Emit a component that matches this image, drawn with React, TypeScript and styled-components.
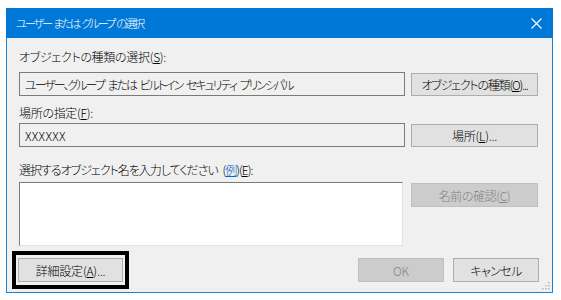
import React from "react";
import styled, { createGlobalStyle } from "styled-components";

const Global = createGlobalStyle`
  html, body { margin: 0; padding: 0; background: #ffffff; }
  body {
    font-family: "Noto Sans CJK JP", "Noto Sans", sans-serif;
    font-size: 12px;
    font-weight: 300;
    color: #000;
  }
`;

const Page = styled.div`
  padding: 8px 0 0 6px;
`;

const Window = styled.div`
  position: relative;
  box-sizing: border-box;
  width: 547px;
  height: 285px;
  border: 1px solid #1883d7;
  border-top: none;
  background: #f0f0f0;
  display: flex;
  flex-direction: column;
`;

const TitleBar = styled.div`
  height: 30px;
  margin: 0 -1px;
  background: #0078d7;
  color: #fff;
  display: flex;
  align-items: center;
  justify-content: space-between;
  padding: 0 11px 0 10px;
`;

const TitleText = styled.span`
  font-size: 11.5px;
  font-feature-settings: "palt";
  letter-spacing: -2.5px;
  word-spacing: 2.5px;
`;

const Body = styled.div`
  flex: 1;
  display: flex;
  flex-direction: column;
  padding: 11px 13px 0 12px;
`;

const Label = styled.div<{ $mt?: number; $mb?: number; $ls?: number }>`
  height: 16px;
  line-height: 16px;
  margin-top: ${(p) => p.$mt ?? 0}px;
  margin-bottom: ${(p) => p.$mb ?? 0}px;
  font-feature-settings: "palt";
  letter-spacing: ${(p) => p.$ls ?? -0.5}px;
  word-spacing: 3px;
`;

const Row = styled.div<{ $align?: string }>`
  display: grid;
  grid-template-columns: 386px 127px;
  column-gap: 6px;
  align-items: ${(p) => p.$align ?? "center"};
`;

const Field = styled.div<{ $ls?: number }>`
  box-sizing: border-box;
  height: 24px;
  border: 1px solid #7a7a7a;
  background: #f0f0f0;
  padding: 0 5px;
  display: flex;
  align-items: center;
  font-feature-settings: "palt";
  letter-spacing: ${(p) => p.$ls ?? 0}px;
  word-spacing: 3px;
  white-space: pre;
  overflow: hidden;
`;

const TextArea = styled.div`
  box-sizing: border-box;
  height: 64px;
  margin-right: 2px;
  background: #fff;
  border: 1px solid;
  border-color: #7a7a7a #e3e3e3 #e3e3e3 #7a7a7a;
`;

const Button = styled.div<{ $disabled?: boolean; $w?: number; $h?: number; $ls?: number }>`
  box-sizing: border-box;
  width: ${(p) => (p.$w ? `${p.$w}px` : "auto")};
  height: ${(p) => p.$h ?? 23}px;
  border: 1px solid ${(p) => (p.$disabled ? "#bfbfbf" : "#adadad")};
  background: ${(p) => (p.$disabled ? "#cccccc" : "#e1e1e1")};
  color: ${(p) => (p.$disabled ? "#838383" : "#000")};
  display: flex;
  align-items: center;
  justify-content: center;
  font-feature-settings: "palt";
  letter-spacing: ${(p) => p.$ls ?? -0.2}px;
  white-space: nowrap;
`;

const Link = styled.span`
  color: #0066cc;
  text-decoration: underline;
`;

const BottomRow = styled.div`
  margin-top: 5px;
  display: flex;
  align-items: center;
`;

const FocusBox = styled.div`
  margin-left: -7px;
  border: 4px solid #000;
  padding: 3px 2px;
  background: #f0f0f0;
`;

const Spacer = styled.div`
  flex: 1;
`;

const ButtonGroup = styled.div`
  display: flex;
  gap: 9px;
`;

const CheckTop = styled.div`
  align-self: start;
  margin-top: 1px;
`;

const Grip = styled.svg`
  position: absolute;
  right: 2px;
  bottom: 2px;
`;

export default function App() {
  return (
    <Page>
      <Global />
      <Window>
        <TitleBar>
          <TitleText>ユーザー または グループ の選択</TitleText>
          <svg width="11" height="11" viewBox="0 0 11 11">
            <path d="M0.5 0.5 L10.5 10.5 M10.5 0.5 L0.5 10.5" stroke="#fff" strokeWidth="1.1" />
          </svg>
        </TitleBar>
        <Body>
          <Label $mb={7} $ls={-0.3}>
            オブジェクトの種類の選択(<u>S</u>):
          </Label>
          <Row>
            <Field $ls={-2}>ユーザー、グループ または ビルトイン セキュリティ プリンシパル</Field>
            <Button $ls={-1.2}>
              オブジェクトの種類(<u>O</u>)...
            </Button>
          </Row>
          <Label $mt={9} $mb={2} $ls={-0.3}>
            場所の指定(<u>F</u>):
          </Label>
          <Row>
            <Field $ls={0.3}>XXXXXX</Field>
            <Button>
              場所(<u>L</u>)...
            </Button>
          </Row>
          <Label $mt={15} $mb={4} $ls={-1}>
            選択するオブジェクト名を入力してください (<Link>例</Link>)(<u>E</u>):
          </Label>
          <Row $align="start">
            <TextArea />
            <CheckTop>
              <Button $disabled $h={24} $ls={-0.4}>
                名前の確認(<u>C</u>)
              </Button>
            </CheckTop>
          </Row>
          <BottomRow>
            <FocusBox>
              <Button $w={105} $h={24}>
                詳細設定(<u>A</u>)...
              </Button>
            </FocusBox>
            <Spacer />
            <ButtonGroup>
              <Button $disabled $w={86} $h={24}>
                OK
              </Button>
              <Button $w={86} $h={24} $ls={-0.6}>
                キャンセル
              </Button>
            </ButtonGroup>
          </BottomRow>
        </Body>
        <Grip width="8" height="8" viewBox="0 0 8 8">
          <rect x="6" y="0" width="1.5" height="1.5" fill="#b8b8b8" />
          <rect x="3" y="3" width="1.5" height="1.5" fill="#b8b8b8" />
          <rect x="6" y="3" width="1.5" height="1.5" fill="#b8b8b8" />
          <rect x="0" y="6" width="1.5" height="1.5" fill="#b8b8b8" />
          <rect x="3" y="6" width="1.5" height="1.5" fill="#b8b8b8" />
          <rect x="6" y="6" width="1.5" height="1.5" fill="#b8b8b8" />
        </Grip>
      </Window>
    </Page>
  );
}
